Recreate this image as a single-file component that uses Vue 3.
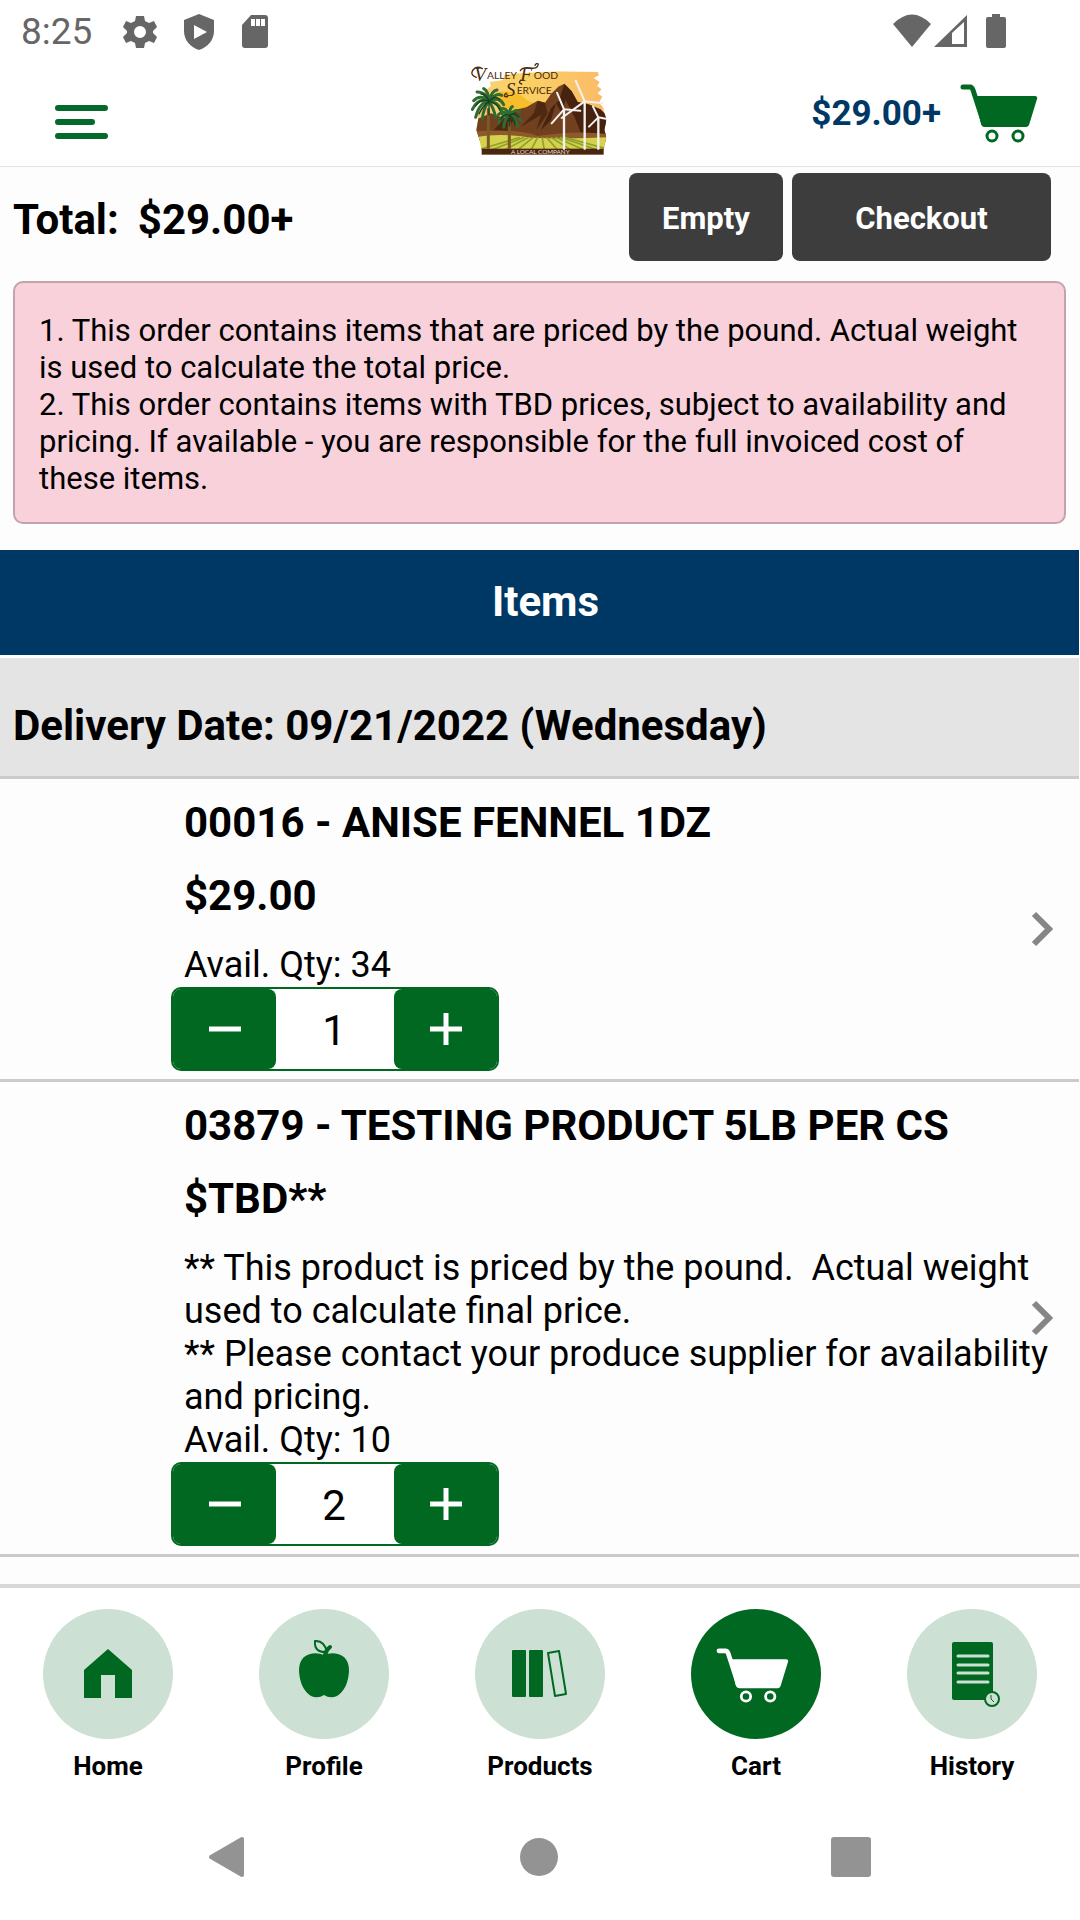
<script setup>
import { ref } from 'vue'

const cartTotal = '$29.00+'

const items = ref([
  {
    id: '00016',
    name: '00016 - ANISE FENNEL 1DZ',
    price: '$29.00',
    notes: [],
    available: 34,
    qty: 1,
  },
  {
    id: '03879',
    name: '03879 - TESTING PRODUCT 5LB PER CS',
    price: '$TBD**',
    notes: [
      '** This product is priced by the pound.  Actual weight used to calculate final price.',
      '** Please contact your produce supplier for availability and pricing.',
    ],
    available: 10,
    qty: 2,
  },
])

const tabs = ['Home', 'Profile', 'Products', 'Cart', 'History']
const activeTab = ref('Cart')

const vineRows = [110, 150, 190, 230, 270, 310, 350, 390, 430, 470, 510]

function step(item, amount) {
  item.qty = Math.max(0, item.qty + amount)
}
</script>

<template>
  <div class="screen">
    <div class="status">
      <div class="status-left">
        <span class="clock">8:25</span>
        <svg class="glyph" width="34" height="36" viewBox="0 0 34 36">
          <path fill-rule="evenodd" d="M13 2h8l1 5 4 2 5-2 3 6-4 4v2l4 4-3 6-5-2-4 2-1 5h-8l-1-5-4-2-5 2-3-6 4-4v-2l-4-4 3-6 5 2 4-2zM17 12a6 6 0 1 0 0 12a6 6 0 0 0 0-12z" />
        </svg>
        <svg class="glyph" width="30" height="36" viewBox="0 0 30 36">
          <path fill-rule="evenodd" d="M15 0l15 6v11c0 9-6 16-15 19C6 33 0 26 0 17V6zM10 11v14l13-7z" />
        </svg>
        <svg class="glyph" width="28" height="36" viewBox="0 0 28 36">
          <path fill-rule="evenodd" d="M10 1h14q3 0 3 3v27q0 3-3 3H4q-3 0-3-3V11zM10 5v7h4V5zM15 5v7h4V5zM20 5v7h4V5z" />
        </svg>
      </div>
      <div class="status-right">
        <svg class="glyph" width="40" height="34" viewBox="0 0 40 34">
          <path d="M1 10Q20 -9 39 10L20 33z" />
        </svg>
        <svg class="glyph" width="34" height="34" viewBox="0 0 34 34">
          <path fill-rule="evenodd" d="M0 33L33 1v32zM18 19v11h12V8z" />
        </svg>
        <svg class="glyph battery" width="20" height="34" viewBox="0 0 20 34">
          <path d="M6 0h8v3h4q2 0 2 2v27q0 2-2 2H2q-2 0-2-2V5q0-2 2-2h4z" />
        </svg>
      </div>
    </div>

    <header class="header">
      <button class="menu" type="button" aria-label="Menu">
        <svg width="54" height="36" viewBox="0 0 54 36" fill="none" stroke="currentColor" stroke-width="6" stroke-linecap="round">
          <path d="M3 4h47M3 18h34M3 32h47" />
        </svg>
      </button>

      <svg class="logo" width="136" height="94" viewBox="90 36 408 282" role="img" aria-label="Valley Food Service">
        <defs>
          <linearGradient id="sky" x1="0" y1="0" x2="1" y2="0">
            <stop offset="0" stop-color="#f9cf7c" />
            <stop offset="0.4" stop-color="#fbd262" />
            <stop offset="1" stop-color="#fbb96a" />
          </linearGradient>
          <clipPath id="scene">
            <path d="M352 64L470 66L474 76L458 84L476 96L468 108L482 118L470 130L484 140L474 158L486 172L496 210L490 240L496 262L488 300L122 300L116 270L106 240L112 205L104 188L122 160L128 126L150 108L146 96L186 90L190 74L240 70z" />
          </clipPath>
        </defs>
        <g clip-path="url(#scene)">
          <rect x="90" y="50" width="410" height="260" fill="url(#sky)" />
          <path d="M160 128Q220 116 250 144T340 146L330 170L190 186z" fill="#f8bd2b" />
          <path d="M100 210L150 190L190 205L230 178L256 172L290 152L312 158L330 132L352 110L370 101L392 124L410 156L440 162L478 178L500 200V270H100z" fill="#70401f" />
          <path d="M370 101L355 150L330 175L300 240L330 210L345 160L362 190L374 150L400 200L420 250L500 255V200L478 178L440 162L410 156L392 124z" fill="#47230f" />
          <path d="M290 152L278 190L240 230L300 195L286 240L320 190L312 158zM190 205L150 250H200L230 178z" fill="#4f2812" />
          <path d="M100 244Q240 236 290 258Q400 240 500 252V275H100z" fill="#8f5a2b" />
          <path d="M100 262Q180 248 270 263Q390 268 500 262V300H100z" fill="#d5d24f" />
          <path v-for="x in vineRows" :key="x" :d="`M${300 + (x - 300) / 3} 262L${x} 300`" stroke="#8fa22b" stroke-width="5" />
        </g>
        <rect x="122" y="296" width="366" height="18" fill="#4b250f" />
        <text x="298" y="311" text-anchor="middle" class="logo-tag">A LOCAL COMPANY</text>

        <g stroke="#7a5b25" stroke-width="9">
          <path d="M142 175V296M205 215V296" />
        </g>
        <g fill="none" stroke="#2f6b33" stroke-width="9" stroke-linecap="round">
          <path d="M144 154Q118 130 98 152M144 154Q112 142 94 178M144 154Q116 156 104 202M144 154Q128 172 124 206M144 154Q132 124 108 126M144 154Q142 122 128 116M144 154Q152 122 168 120M144 154Q166 126 182 136M144 154Q176 138 188 164M144 154Q176 156 184 192M144 154Q158 174 164 202" />
          <path d="M205 196Q186 178 172 194M205 196Q180 194 172 220M205 196Q190 206 188 232M205 196Q196 174 184 176M205 196Q206 174 214 170M205 196Q222 174 236 186M205 196Q230 190 240 212M205 196Q224 204 230 230" />
        </g>
        <g fill="none" stroke="#16411f" stroke-width="4" stroke-linecap="round">
          <path d="M144 154Q120 142 104 168M144 154Q126 166 114 192M144 154Q136 132 120 132M144 154Q160 134 176 148M144 154Q168 158 176 180M144 154V194" />
          <path d="M205 196Q188 188 180 208M205 196Q222 186 234 202M205 196V228M205 196Q220 206 222 224" />
        </g>

        <g stroke="#f5f3f1" fill="none" stroke-linecap="round">
          <path stroke-width="7" d="M369 182V296M431 158V296M472 206V296" />
          <path stroke-width="6" d="M369 178L348 128M369 178L332 220M369 178L418 182M431 154L404 92M431 154L362 204M431 154L486 160M472 202L456 170M472 202L444 230M472 202L494 206" />
        </g>

        <g class="logo-name">
          <text x="100" y="94" class="initial">V</text>
          <text x="138" y="86">ALLEY</text>
          <text x="238" y="92" class="initial">F</text>
          <text x="278" y="86">OOD</text>
          <text x="194" y="137" class="initial">S</text>
          <text x="227" y="131">ERVICE</text>
        </g>
        <g fill="none" stroke="#4b2a12" stroke-width="4" stroke-linecap="round">
          <path d="M106 82Q86 74 96 60T124 56M238 62Q246 50 268 54T292 42Q286 38 282 46M240 90Q230 98 242 102M194 130Q184 142 200 140" />
        </g>
      </svg>

      <a class="mini-cart" href="#cart">
        <span>{{ cartTotal }}</span>
        <svg width="78" height="60" viewBox="0 0 78 60">
          <path d="M3 3H10Q12 3 13 6L24 40" fill="none" stroke="currentColor" stroke-width="5" stroke-linecap="round" />
          <path d="M15 12H75Q78 12 77 15L69 41Q68 43 66 43H25Q22 43 21 40z" fill="currentColor" />
          <circle cx="32" cy="52" r="5" fill="none" stroke="currentColor" stroke-width="3" />
          <circle cx="58" cy="52" r="5" fill="none" stroke="currentColor" stroke-width="3" />
        </svg>
      </a>
    </header>

    <main class="main">
      <section class="summary">
        <h1 class="total"><span>Total:</span><span>{{ cartTotal }}</span></h1>
        <div class="actions">
          <button class="action empty" type="button">Empty</button>
          <button class="action checkout" type="button">Checkout</button>
        </div>
      </section>

      <div class="notice">
        <p>1. This order contains items that are priced by the pound. Actual weight is used to calculate the total price.</p>
        <p>2. This order contains items with TBD prices, subject to availability and pricing. If available - you are responsible for the full invoiced cost of these items.</p>
      </div>

      <section class="list">
        <h2 class="list-title">Items</h2>
        <h3 class="delivery">Delivery Date: 09/21/2022 (Wednesday)</h3>

        <article v-for="item in items" :key="item.id" class="item">
          <h4>{{ item.name }}</h4>
          <p class="price">{{ item.price }}</p>
          <div class="notes">
            <p v-for="note in item.notes" :key="note">{{ note }}</p>
            <p>Avail. Qty: {{ item.available }}</p>
          </div>
          <div class="stepper">
            <button type="button" aria-label="Decrease quantity" @click="step(item, -1)">
              <svg width="32" height="32" viewBox="0 0 32 32"><path d="M0 16h32" stroke="currentColor" stroke-width="5" /></svg>
            </button>
            <input v-model.number="item.qty" type="text" inputmode="numeric" :aria-label="`Quantity of ${item.name}`" />
            <button type="button" aria-label="Increase quantity" @click="step(item, 1)">
              <svg width="32" height="32" viewBox="0 0 32 32"><path d="M0 16h32M16 0v32" stroke="currentColor" stroke-width="5" /></svg>
            </button>
          </div>
          <svg class="chevron" width="22" height="36" viewBox="0 0 22 36">
            <path d="M3 3l15 15L3 33" fill="none" stroke="#868686" stroke-width="6" />
          </svg>
        </article>
      </section>
    </main>

    <nav class="tabs">
      <a
        v-for="tab in tabs"
        :key="tab"
        :href="`#${tab.toLowerCase()}`"
        class="tab"
        :class="{ active: tab === activeTab }"
        @click.prevent="activeTab = tab"
      >
        <svg class="disc" width="130" height="130" viewBox="0 0 130 130">
          <path v-if="tab === 'Home'" d="M65 40L89 61V89H72V66H58V89H41V61z" fill="currentColor" />
          <g v-else-if="tab === 'Profile'">
            <path d="M65 46Q58 43 51 45Q40 48 40 62Q41 80 52 87Q59 90 65 86Q71 90 78 87Q89 80 90 62Q90 48 79 45Q72 43 65 46z" fill="currentColor" />
            <path d="M66 46Q67 41 71 38" fill="none" stroke="currentColor" stroke-width="4" stroke-linecap="round" />
            <path d="M56 32Q65 31 68 43Q55 44 56 32z" fill="none" stroke="currentColor" stroke-width="2" stroke-linejoin="round" />
          </g>
          <g v-else-if="tab === 'Products'">
            <rect x="37" y="41" width="14" height="47" rx="1" fill="currentColor" />
            <rect x="54" y="41" width="14" height="47" rx="1" fill="currentColor" />
            <path d="M73 44L84 42L91 85L80 87z" fill="none" stroke="currentColor" stroke-width="2" stroke-linejoin="round" />
          </g>
          <svg v-else-if="tab === 'Cart'" x="25" y="39" width="73" height="56" viewBox="0 0 78 60">
            <path d="M3 3H10Q12 3 13 6L24 40" fill="none" stroke="currentColor" stroke-width="5" stroke-linecap="round" />
            <path d="M15 12H75Q78 12 77 15L69 41Q68 43 66 43H25Q22 43 21 40z" fill="currentColor" />
            <circle cx="32" cy="52" r="5" fill="none" stroke="currentColor" stroke-width="3" />
            <circle cx="58" cy="52" r="5" fill="none" stroke="currentColor" stroke-width="3" />
          </svg>
          <g v-else>
            <rect x="45" y="33" width="41" height="58" rx="2" fill="currentColor" />
            <path d="M51 47h30M51 56h30M51 64h30M51 73h30" stroke="#cce1d3" stroke-width="3" stroke-linecap="round" />
            <circle cx="85" cy="90" r="7" fill="#cce1d3" stroke="currentColor" stroke-width="2" />
            <path d="M84 86v4l3 3" fill="none" stroke="currentColor" stroke-width="1" />
          </g>
        </svg>
        <span>{{ tab }}</span>
      </a>
    </nav>

    <div class="system">
      <button type="button" aria-label="Back">
        <svg width="40" height="42" viewBox="0 0 40 42"><path d="M35 3V39L4 21z" fill="#939393" stroke="#939393" stroke-width="4" stroke-linejoin="round" /></svg>
      </button>
      <button type="button" aria-label="Home screen">
        <svg width="40" height="42" viewBox="0 0 40 42"><circle cx="20" cy="21" r="19" fill="#939393" /></svg>
      </button>
      <button type="button" aria-label="Recent apps">
        <svg width="40" height="42" viewBox="0 0 40 42"><rect y="1" width="40" height="40" rx="3" fill="#939393" /></svg>
      </button>
    </div>
  </div>
</template>

<style>
body {
  margin: 0;
  background: #ffffff;
}
</style>

<style scoped>
.screen {
  display: flex;
  flex-direction: column;
  min-height: 100vh;
  font-family: Roboto, "Liberation Sans", sans-serif;
  color: #000000;
  background: #ffffff;
}

h1,
h2,
h3,
h4,
p {
  margin: 0;
}

button {
  padding: 0;
  border: 0;
  background: none;
  font-family: inherit;
  color: inherit;
  cursor: pointer;
}

a {
  color: inherit;
  text-decoration: none;
}

svg {
  display: block;
  flex: none;
}

.status {
  display: flex;
  justify-content: space-between;
  align-items: center;
  height: 62px;
  padding: 0 74px 0 21px;
  color: #666666;
}

.status-left {
  display: flex;
  align-items: center;
  gap: 27px;
  padding-top: 2px;
}

.status-right {
  display: flex;
  align-items: center;
  gap: 2px;
}

.battery {
  margin-left: 16px;
}

.clock {
  padding-right: 4px;
  font-size: 37px;
  line-height: 42px;
}

.glyph {
  fill: currentColor;
}

.header {
  display: grid;
  grid-template-columns: 1fr auto 1fr;
  align-items: end;
  height: 104px;
  padding: 0 42px 0 55px;
  border-bottom: 1px solid #e3e3e3;
}

.menu {
  justify-self: start;
  padding-bottom: 26px;
  color: #04692a;
}

.logo {
  margin: 0 0 10px -16px;
}

.logo-name {
  font-family: Lato, sans-serif;
  font-size: 31px;
  fill: #4b2a12;
}

.initial {
  font-family: "Liberation Serif", serif;
  font-style: italic;
  font-size: 58px;
}

.logo-tag {
  font-family: Lato, sans-serif;
  font-size: 19px;
  fill: #e9dfd0;
}

.mini-cart {
  display: flex;
  justify-content: flex-end;
  align-items: center;
  gap: 19px;
  padding-bottom: 22px;
  font-size: 35px;
  font-weight: 700;
  line-height: 40px;
  color: #003865;
}

.mini-cart svg {
  color: #006820;
}

.main {
  flex: 1;
  padding-bottom: 27px;
  background: #fdfdfd;
}

.summary {
  display: flex;
  justify-content: space-between;
  align-items: center;
  padding: 6px 29px 20px 13px;
}

.total {
  display: flex;
  gap: 19px;
  padding-top: 6px;
  font-size: 42px;
  font-weight: 700;
  line-height: 50px;
}

.actions {
  display: flex;
  gap: 9px;
}

.action {
  height: 88px;
  padding-top: 2px;
  border-radius: 8px;
  background: #3d3d3d;
  font-size: 31px;
  font-weight: 700;
  color: #ffffff;
}

.empty {
  width: 154px;
}

.checkout {
  width: 259px;
}

.notice {
  margin: 0 14px 26px 13px;
  padding: 29px 24px 25px;
  border: 2px solid #c5a3ae;
  border-radius: 10px;
  background: #f9d1db;
  font-size: 31px;
  line-height: 37px;
}

.list {
  margin-right: 1px;
}

.list-title {
  padding: 27px 0 28px 12px;
  border-bottom: 3px solid #ffffff;
  background: #003865;
  background-clip: padding-box;
  font-size: 42px;
  line-height: 50px;
  text-align: center;
  color: #ffffff;
}

.delivery {
  padding: 43px 13px 25px;
  border-bottom: 3px solid #cbcbcb;
  background: #e4e4e4;
  font-size: 42px;
  line-height: 50px;
}

.item {
  position: relative;
  padding: 19px 14px 8px 184px;
  border-bottom: 3px solid #cbcbcb;
}

.item h4,
.price {
  font-size: 42px;
  font-weight: 700;
  line-height: 50px;
}

.price {
  margin: 23px 0;
}

.notes {
  font-size: 36px;
  line-height: 43px;
  white-space: pre-wrap;
}

.stepper {
  display: flex;
  box-sizing: border-box;
  width: 328px;
  height: 84px;
  margin-left: -13px;
  border: 2px solid #006820;
  border-radius: 10px;
  background: #ffffff;
}

.stepper button {
  display: flex;
  justify-content: center;
  align-items: center;
  width: 103px;
  border-radius: 8px;
  background: #006820;
  color: #ffffff;
}

.stepper input {
  flex: 1;
  min-width: 0;
  padding: 2px 2px 0 0;
  border: 0;
  background: none;
  font-family: inherit;
  font-size: 42px;
  text-align: center;
  color: #000000;
}

.chevron {
  position: absolute;
  top: 50%;
  right: 26px;
  transform: translateY(-50%);
}

.tabs {
  display: grid;
  grid-template-columns: repeat(5, 1fr);
  padding-top: 21px;
  border-top: 4px solid #d8d8d8;
}

.tab {
  display: flex;
  flex-direction: column;
  align-items: center;
  gap: 12px;
  font-size: 26px;
  font-weight: 700;
  line-height: 30px;
}

.disc {
  border-radius: 50%;
  background: #cce1d3;
  color: #006820;
}

.active .disc {
  background: #006820;
  color: #ffffff;
}

.system {
  display: flex;
  justify-content: space-between;
  padding: 55px 209px 42px 207px;
}
</style>
